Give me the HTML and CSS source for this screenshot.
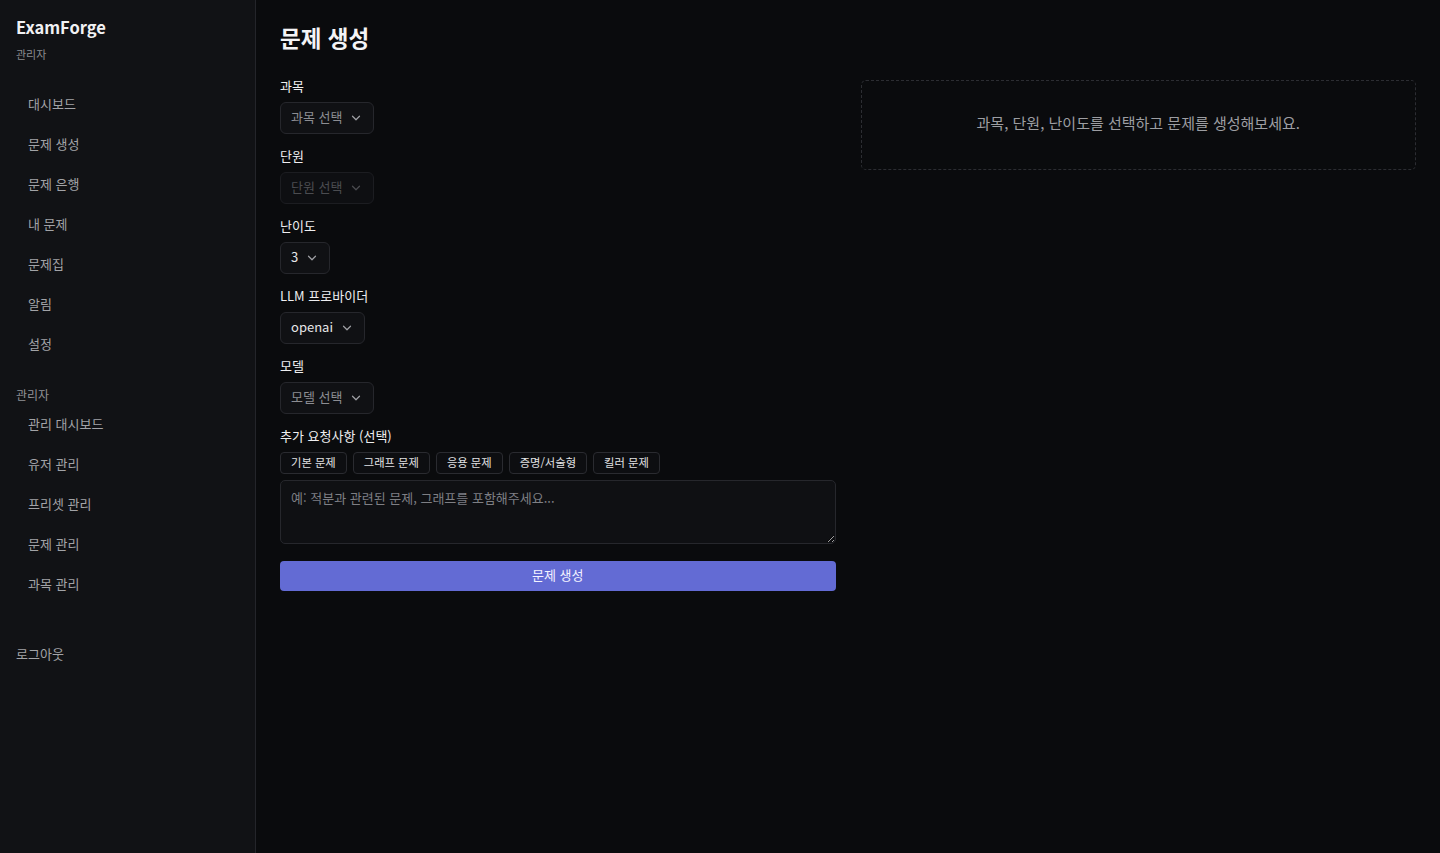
FILE: index.html
```html
<!DOCTYPE html>
<html lang="ko">
<head>
<meta charset="utf-8">
<title>ExamForge - 문제 생성</title>
<link rel="stylesheet" href="styles.css">
</head>
<body>
<div class="app">
  <aside class="sidebar">
    <div class="brand">
      <div class="brand-name">ExamForge</div>
      <div class="brand-role">관리자</div>
    </div>
    <nav class="nav nav-main">
      <a class="nav-item">대시보드</a>
      <a class="nav-item">문제 생성</a>
      <a class="nav-item">문제 은행</a>
      <a class="nav-item">내 문제</a>
      <a class="nav-item">문제집</a>
      <a class="nav-item">알림</a>
      <a class="nav-item">설정</a>
    </nav>
    <div class="nav-section">관리자</div>
    <nav class="nav">
      <a class="nav-item">관리 대시보드</a>
      <a class="nav-item">유저 관리</a>
      <a class="nav-item">프리셋 관리</a>
      <a class="nav-item">문제 관리</a>
      <a class="nav-item">과목 관리</a>
    </nav>
    <a class="logout">로그아웃</a>
  </aside>

  <main class="main">
    <h1 class="title">문제 생성</h1>
    <div class="grid">
      <form class="form">
        <div class="field">
          <label class="label">과목</label>
          <div class="select placeholder">과목 선택<svg class="chev" viewBox="0 0 16 16"><path d="M4 6l4 4 4-4"/></svg></div>
        </div>
        <div class="field">
          <label class="label">단원</label>
          <div class="select disabled">단원 선택<svg class="chev" viewBox="0 0 16 16"><path d="M4 6l4 4 4-4"/></svg></div>
        </div>
        <div class="field">
          <label class="label">난이도</label>
          <div class="select">3<svg class="chev" viewBox="0 0 16 16"><path d="M4 6l4 4 4-4"/></svg></div>
        </div>
        <div class="field">
          <label class="label">LLM 프로바이더</label>
          <div class="select">openai<svg class="chev" viewBox="0 0 16 16"><path d="M4 6l4 4 4-4"/></svg></div>
        </div>
        <div class="field">
          <label class="label">모델</label>
          <div class="select placeholder">모델 선택<svg class="chev" viewBox="0 0 16 16"><path d="M4 6l4 4 4-4"/></svg></div>
        </div>
        <div class="field extra">
          <label class="label">추가 요청사항 (선택)</label>
          <div class="chips">
            <span class="chip">기본 문제</span>
            <span class="chip">그래프 문제</span>
            <span class="chip">응용 문제</span>
            <span class="chip">증명/서술형</span>
            <span class="chip">킬러 문제</span>
          </div>
          <textarea class="textarea" placeholder="예: 적분과 관련된 문제, 그래프를 포함해주세요..."></textarea>
        </div>
        <button type="button" class="submit">문제 생성</button>
      </form>
      <section class="result">
        <p class="empty">과목, 단원, 난이도를 선택하고 문제를 생성해보세요.</p>
      </section>
    </div>
  </main>
</div>
</body>
</html>
```

FILE: styles.css
```css
* { box-sizing: border-box; }

html, body {
  margin: 0;
  height: 100%;
}

body {
  background: #0a0b0d;
  color: #e8e8ea;
  font-family: "Noto Sans CJK KR", "Noto Sans", sans-serif;
  font-size: 14px;
}

.app {
  display: flex;
  min-height: 100vh;
}

/* Sidebar */
.sidebar {
  width: 256px;
  flex: none;
  background: #111215;
  border-right: 1px solid #24252a;
  padding: 15px 16px 16px;
  display: flex;
  flex-direction: column;
}

.brand-name {
  font-size: 16.5px;
  font-weight: 600;
  color: #f1f1f3;
  line-height: 24px;
}

.brand-role {
  font-size: 11px;
  color: #8b8c90;
  line-height: 16px;
  margin-top: 7px;
}

.nav {
  display: flex;
  flex-direction: column;
}

.nav-main { margin-top: 22px; }

.nav-item {
  display: block;
  padding: 0 12px;
  height: 40px;
  line-height: 40px;
  font-size: 13px;
  color: #a2a3a7;
  cursor: pointer;
}

.nav-section {
  margin-top: 22px;
  font-size: 12px;
  color: #909195;
  line-height: 18px;
}

.logout {
  margin-top: 40px;
  font-size: 13px;
  color: #a2a3a7;
  line-height: 20px;
  cursor: pointer;
}

/* Main */
.main {
  flex: 1;
  padding: 19px 24px 24px;
}

.title {
  margin: 0 0 21px;
  font-size: 22.5px;
  font-weight: 700;
  line-height: 36px;
  color: #f4f4f6;
}

.grid {
  display: grid;
  grid-template-columns: 1fr 1fr;
  gap: 25px;
  align-items: start;
}

.form {
  display: flex;
  flex-direction: column;
}

.field {
  display: flex;
  flex-direction: column;
  align-items: flex-start;
  margin-bottom: 12px;
}

.label {
  font-size: 13px;
  line-height: 20px;
  color: #eeeef0;
  margin-bottom: 6px;
}

.select {
  display: inline-flex;
  align-items: center;
  height: 32px;
  padding: 0 10px 3px;
  border: 1px solid #26272c;
  border-radius: 6px;
  background: #101114;
  font-size: 13px;
  color: #e6e6e8;
}

.select.placeholder { color: #8c8d92; }

.select.disabled {
  color: #4b4c50;
  border-color: #1c1d21;
  background: #0e0f12;
}

.chev {
  width: 14px;
  height: 14px;
  margin-left: 7px;
  margin-top: 3px;
  fill: none;
  stroke: #a0a1a5;
  stroke-width: 1.4;
  stroke-linecap: round;
  stroke-linejoin: round;
}

.select.disabled .chev { stroke: #4b4c50; }

.extra { margin-bottom: 17px; align-items: stretch; }
.extra .label { margin-bottom: 6px; }

.chips {
  display: flex;
  gap: 6px;
  margin-bottom: 6px;
}

.chip {
  display: inline-block;
  height: 22px;
  line-height: 19px;
  padding: 0 10px;
  border: 1px solid #2a2b30;
  border-radius: 4px;
  background: #0d0e11;
  font-size: 11.3px;
  color: #e2e2e4;
}

.textarea {
  width: 100%;
  height: 64px;
  resize: vertical;
  background: #0f1013;
  border: 1px solid #26272c;
  border-radius: 5px;
  padding: 7px 10px;
  font-family: inherit;
  font-size: 13px;
  color: #e6e6e8;
}

.textarea::placeholder { color: #7e7f84; }

.submit {
  height: 30px;
  border: none;
  border-radius: 4px;
  background: #636bd4;
  color: #f3f3ff;
  font-family: inherit;
  font-size: 13px;
  padding-bottom: 4px;
  cursor: pointer;
}

/* Result panel */
.result {
  margin-top: 4px;
  height: 90px;
  border: 1px dashed #2c2d32;
  border-radius: 5px;
  display: flex;
  align-items: center;
  justify-content: center;
}

.empty {
  margin: -6px 0 0;
  font-size: 15px;
  color: #9d9ea2;
}
```
